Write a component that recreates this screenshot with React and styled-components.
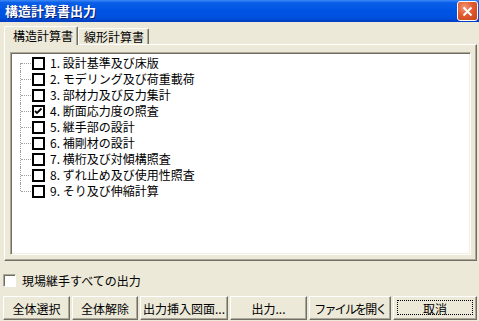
import React, { useState } from "react";
import styled, { createGlobalStyle, css } from "styled-components";

const GlobalStyle = createGlobalStyle`
  html, body { margin: 0; padding: 0; background: #ece9d8; }
  body { font-family: "Noto Sans CJK JP", "Liberation Sans", sans-serif; }
`;

const items = [
  { label: "1. 設計基準及び床版", checked: false },
  { label: "2. モデリング及び荷重載荷", checked: false },
  { label: "3. 部材力及び反力集計", checked: false },
  { label: "4. 断面応力度の照査", checked: true },
  { label: "5. 継手部の設計", checked: false },
  { label: "6. 補剛材の設計", checked: false },
  { label: "7. 横桁及び対傾構照査", checked: false },
  { label: "8. ずれ止め及び使用性照査", checked: false },
  { label: "9. そり及び伸縮計算", checked: false },
];

const buttons = [
  { label: "全体選択", width: 67 },
  { label: "全体解除", width: 66 },
  { label: "出力挿入図面...", width: 88 },
  { label: "出力...", width: 77 },
  { label: "ファイルを開く", width: 82, tight: true },
  { label: "取消", width: 84, focused: true },
];

const Window = styled.div`
  width: 479px;
  height: 321px;
  background: #ece9d8;
  display: flex;
  flex-direction: column;
  overflow: hidden;
  font-size: 12px;
  color: #000;
`;

const TitleBar = styled.div`
  height: 22px;
  flex: none;
  display: flex;
  align-items: center;
  justify-content: space-between;
  padding: 0 1px 0 5px;
  background: linear-gradient(180deg, #3d8af7 0%, #0a5fe8 12%, #0054e3 45%, #0050de 80%, #003dc0 100%);
`;

const Title = styled.span`
  color: #fff;
  font-weight: bold;
  font-size: 13px;
  line-height: 22px;
  text-shadow: 1px 1px 0 #0a1e70;
`;

const CloseButton = styled.div`
  width: 21px;
  height: 20px;
  box-sizing: border-box;
  border: 1px solid #fff;
  border-radius: 3px;
  background: radial-gradient(circle at 35% 30%, #f29a7a 0%, #e25a2f 45%, #c4411b 100%);
  display: flex;
  align-items: center;
  justify-content: center;
`;

const Body = styled.div`
  flex: 1;
  display: flex;
  flex-direction: column;
  padding: 4px 2px 0 4px;
`;

const TabRow = styled.div`
  display: flex;
  align-items: flex-end;
  height: 18px;
  position: relative;
  z-index: 1;
`;

const Tab = styled.div`
  box-sizing: border-box;
  height: ${(p) => (p.$active ? 19 : 16)}px;
  width: ${(p) => p.$width}px;
  padding: 0 0 0 ${(p) => (p.$active ? 8 : 5)}px;
  line-height: ${(p) => (p.$active ? 17 : 15)}px;
  background: #ece9d8;
  border-top: 1px solid #fff;
  border-left: 1px solid #fff;
  border-right: 1px solid #716f64;
  box-shadow: inset -1px 0 0 #aca899;
  border-radius: 2px 2px 0 0;
  white-space: nowrap;
  ${(p) =>
    p.$active &&
    css`
      margin-bottom: -1px;
    `}
`;

const Panel = styled.div`
  box-sizing: border-box;
  width: 473px;
  height: 217px;
  border-top: 1px solid #fff;
  border-left: 1px solid #fff;
  border-right: 1px solid #716f64;
  border-bottom: 1px solid #716f64;
  box-shadow: inset -1px -1px 0 #aca899;
  padding: 7px 5px 5px 5px;
`;

const TreeBox = styled.div`
  box-sizing: border-box;
  width: 461px;
  height: 203px;
  background: #fff;
  border-top: 1px solid #aca899;
  border-left: 1px solid #aca899;
  border-right: 1px solid #fff;
  border-bottom: 1px solid #fff;
  box-shadow: inset 1px 1px 0 #716f64, inset -1px -1px 0 #f1efe2;
  padding: 2px 0 0 9px;
`;

const TreeList = styled.ul`
  list-style: none;
  margin: 0;
  padding: 0;
`;

const TreeRow = styled.li`
  height: 16px;
  display: flex;
  align-items: center;
  cursor: default;
`;

const Branch = styled.span`
  width: 12px;
  height: 16px;
  flex: none;
  position: relative;
  &::before {
    content: "";
    position: absolute;
    left: 0;
    top: ${(p) => (p.$first ? 8 : 0)}px;
    height: ${(p) => (p.$last || p.$first ? 8 : 16)}px;
    border-left: 1px dotted #a0a0a0;
  }
  &::after {
    content: "";
    position: absolute;
    left: 1px;
    top: 8px;
    width: 10px;
    border-top: 1px dotted #a0a0a0;
  }
`;

const TreeCheck = styled.span`
  box-sizing: border-box;
  width: 13px;
  height: 13px;
  flex: none;
  border: 2px solid #000;
  background: #fff;
  display: flex;
  align-items: center;
  justify-content: center;
  margin-right: 5px;
`;

const Label = styled.span`
  line-height: 16px;
  white-space: nowrap;
`;

const OptionRow = styled.label`
  display: flex;
  align-items: center;
  margin: 12px 0 0 -1px;
  height: 14px;
`;

const OptionBox = styled.span`
  box-sizing: border-box;
  width: 13px;
  height: 13px;
  background: #fff;
  border: 1px solid;
  border-color: #aca899 #fff #fff #aca899;
  box-shadow: inset 1px 1px 0 #716f64;
  margin-right: 6px;
`;

const ButtonRow = styled.div`
  display: flex;
  gap: 2px;
  margin: 9px 0 0 -1px;
`;

const Button = styled.button`
  box-sizing: border-box;
  width: ${(p) => p.$width}px;
  height: 24px;
  padding: 0;
  font: inherit;
  font-size: 12px;
  letter-spacing: ${(p) => (p.$tight ? "-1.8px" : "0")};
  color: #000;
  background: #ece9d8;
  border-top: 1px solid #fff;
  border-left: 1px solid #fff;
  border-right: 1px solid #716f64;
  border-bottom: 1px solid #716f64;
  box-shadow: inset -1px -1px 0 #aca899;
  white-space: nowrap;
  overflow: hidden;
  position: relative;
  ${(p) =>
    p.$focused &&
    css`
      &::after {
        content: "";
        position: absolute;
        inset: 3px 3px 4px 3px;
        border: 1px dotted #000;
      }
    `}
`;

function CheckMark() {
  return (
    <svg width="9" height="9" viewBox="0 0 9 9">
      <path d="M1 4 L3 6 L7.5 1.5" fill="none" stroke="#000" strokeWidth="1.8" />
    </svg>
  );
}

export default function App() {
  const [list, setList] = useState(items);

  function toggle(i) {
    setList(list.map((it, idx) => (idx === i ? { ...it, checked: !it.checked } : it)));
  }

  return (
    <>
      <GlobalStyle />
      <Window>
        <TitleBar>
          <Title>構造計算書出力</Title>
          <CloseButton>
            <svg width="11" height="11" viewBox="0 0 11 11">
              <path d="M1.5 1.5 L9.5 9.5 M9.5 1.5 L1.5 9.5" stroke="#fff" strokeWidth="2" />
            </svg>
          </CloseButton>
        </TitleBar>
        <Body>
          <TabRow>
            <Tab $active $width={74}>構造計算書</Tab>
            <Tab $width={71}>線形計算書</Tab>
          </TabRow>
          <Panel>
            <TreeBox>
              <TreeList>
                {list.map((it, i) => (
                  <TreeRow key={i} onClick={() => toggle(i)}>
                    <Branch $first={i === 0} $last={i === list.length - 1} />
                    <TreeCheck>{it.checked && <CheckMark />}</TreeCheck>
                    <Label>{it.label}</Label>
                  </TreeRow>
                ))}
              </TreeList>
            </TreeBox>
          </Panel>
          <OptionRow>
            <OptionBox />
            <span>現場継手すべての出力</span>
          </OptionRow>
          <ButtonRow>
            {buttons.map((b) => (
              <Button key={b.label} $width={b.width} $focused={b.focused} $tight={b.tight}>
                {b.label}
              </Button>
            ))}
          </ButtonRow>
        </Body>
      </Window>
    </>
  );
}
